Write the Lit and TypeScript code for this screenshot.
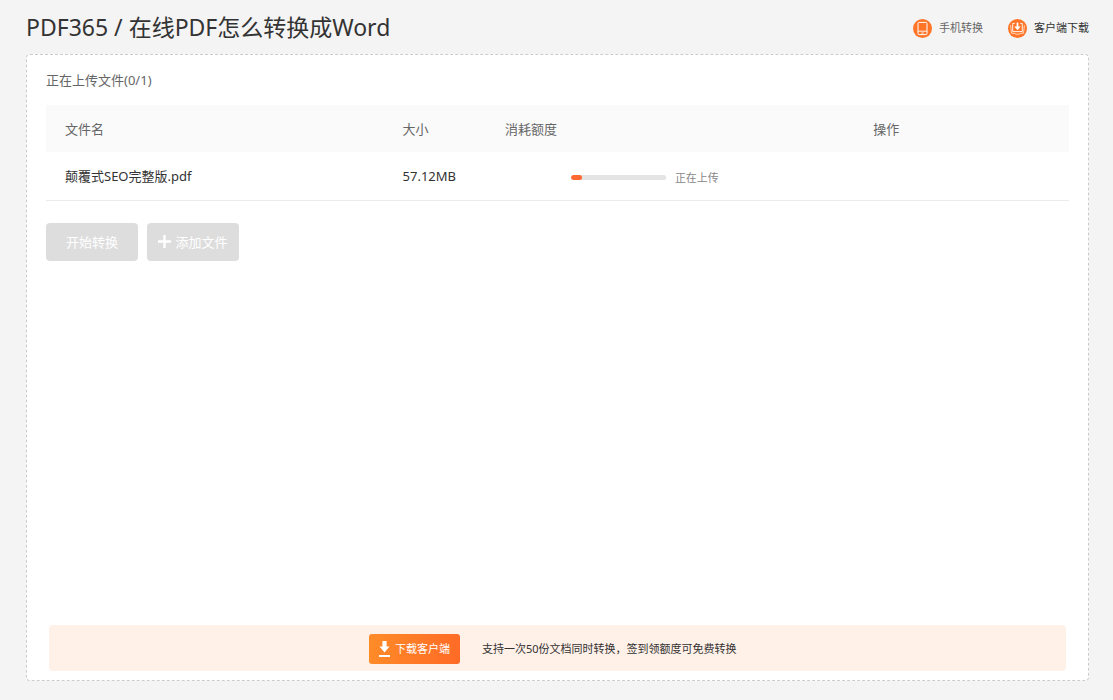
import { LitElement, html, css } from "lit";
import { customElement, state } from "lit/decorators.js";

interface UploadItem {
  name: string;
  size: string;
  percent: number;
  status: string;
}

@customElement("app-root")
export class AppRoot extends LitElement {
  static styles = css`
    :host {
      display: block;
      font-family: "Noto Sans", "Noto Sans CJK SC", sans-serif;
      font-size: 13px;
      line-height: 20px;
      color: #333;
    }
    * {
      box-sizing: border-box;
    }
    .page {
      display: flex;
      flex-direction: column;
      min-height: 100vh;
      padding: 0 24px 19px 26px;
      background: #f4f4f4;
    }
    .top {
      display: flex;
      align-items: center;
      justify-content: space-between;
      height: 54px;
    }
    .title {
      margin: 0;
      font-size: 23px;
      line-height: 32px;
      font-weight: 400;
    }
    .links {
      display: flex;
      gap: 25px;
      padding-top: 2px;
    }
    .link {
      display: flex;
      align-items: center;
      gap: 7px;
      font-size: 11px;
      color: #333;
      text-decoration: none;
    }
    .link.muted {
      color: #666;
    }
    .panel {
      flex: 1;
      display: flex;
      flex-direction: column;
      padding: 15px 19px 9px;
      background: #fff;
      border: 1px dashed #ccc;
      border-radius: 4px;
    }
    .status {
      margin: 0 0 15px;
      color: #666;
    }
    .files {
      width: 100%;
      table-layout: fixed;
      border-collapse: collapse;
    }
    .files th,
    .files td {
      padding: 0 19px;
      text-align: left;
      font-weight: 400;
    }
    .files th {
      height: 47px;
      background: #fafafa;
      color: #666;
    }
    .files td {
      height: 48px;
      border-bottom: 1px solid #ebebeb;
    }
    .col-name {
      width: 33%;
    }
    .col-size {
      width: 10%;
    }
    .col-quota {
      width: 36%;
    }
    .upload {
      display: flex;
      align-items: center;
      gap: 9px;
      padding: 4px 0 0 66px;
      font-size: 11px;
      color: #888;
    }
    .bar {
      appearance: none;
      display: block;
      width: 95px;
      height: 5px;
      border: 0;
      border-radius: 3px;
      overflow: hidden;
      background: #e4e4e4;
    }
    .bar::-webkit-progress-bar {
      background: #e4e4e4;
      border-radius: 3px;
    }
    .bar::-webkit-progress-value {
      background: #ff6a32;
      border-radius: 3px;
    }
    .actions {
      display: flex;
      gap: 9px;
      margin-top: 22px;
    }
    .btn {
      display: flex;
      align-items: center;
      justify-content: center;
      gap: 4px;
      min-width: 92px;
      height: 38px;
      padding: 0 10px;
      border: 0;
      border-radius: 4px;
      background: #ddd;
      color: #fff;
      font: inherit;
    }
    .banner {
      display: flex;
      align-items: center;
      justify-content: center;
      gap: 22px;
      min-height: 46px;
      margin: auto 3px 0;
      padding-top: 2px;
      background: #fff1e8;
      border-radius: 4px;
      font-size: 11px;
    }
    .download {
      display: flex;
      align-items: center;
      justify-content: center;
      gap: 5px;
      height: 30px;
      padding: 0 10px;
      border: 0;
      border-radius: 3px;
      background: linear-gradient(100deg, #ff8c28, #ff6a26);
      color: #fff;
      font: inherit;
    }
    .note {
      min-width: 264px;
    }
    svg {
      display: block;
      flex: none;
    }
  `;

  @state() private files: UploadItem[] = [
    { name: "颠覆式SEO完整版.pdf", size: "57.12MB", percent: 12, status: "正在上传" },
  ];

  render() {
    return html`
      <div class="page">
        <header class="top">
          <h1 class="title">PDF365 / 在线PDF怎么转换成Word</h1>
          <nav class="links">
            <a class="link muted" href="#mobile">
              <svg width="19" height="19" viewBox="0 0 19 19" fill="none" aria-hidden="true">
                <circle cx="9.5" cy="9.5" r="9.5" fill="#ff7426" />
                <rect x="5" y="3.4" width="9" height="12.2" rx="1.2" stroke="#fff" />
                <path d="M5 12.2h9" stroke="#fff" stroke-width="0.9" />
                <path d="M8.5 14h2" stroke="#fff" stroke-width="1" />
              </svg>
              手机转换
            </a>
            <a class="link" href="#client">
              <svg width="19" height="19" viewBox="0 0 19 19" fill="none" aria-hidden="true">
                <circle cx="9.5" cy="9.5" r="9.5" fill="#ff7426" />
                <path d="M6.8 4.4H4.7v8.2h9.6V4.4h-2.1" stroke="#fff" stroke-width="0.9" />
                <path
                  d="M2.6 6.2 3.5 14.2Q6.5 14 8 15.2h3Q12.500 14 15.500 14.2L16.400 6.2"
                  stroke="#ffe0cc"
                  stroke-width="0.9"
                />
                <path d="M9.5 3.6v5" stroke="#fff" stroke-width="1.8" />
                <path d="M6.300 7.600h6.400L9.500 11.300z" fill="#fff" />
              </svg>
              客户端下载
            </a>
          </nav>
        </header>
        <main class="panel">
          <p class="status">正在上传文件(0/${this.files.length})</p>
          <table class="files">
            <thead>
              <tr>
                <th class="col-name" scope="col">文件名</th>
                <th class="col-size" scope="col">大小</th>
                <th class="col-quota" scope="col">消耗额度</th>
                <th scope="col">操作</th>
              </tr>
            </thead>
            <tbody>
              ${this.files.map(
                (f) => html`
                  <tr>
                    <td>${f.name}</td>
                    <td>${f.size}</td>
                    <td>
                      <label class="upload">
                        <progress class="bar" max="100" .value=${f.percent}></progress>
                        ${f.status}
                      </label>
                    </td>
                    <td></td>
                  </tr>
                `
              )}
            </tbody>
          </table>
          <div class="actions">
            <button class="btn" type="button" disabled>开始转换</button>
            <button class="btn" type="button" disabled>
              <svg width="13" height="13" viewBox="0 0 13 13" aria-hidden="true">
                <path d="M6.5 0v13M0 6.5h13" stroke="#fff" stroke-width="2.4" />
              </svg>
              添加文件
            </button>
          </div>
          <footer class="banner">
            <button class="download" type="button">
              <svg width="11" height="16" viewBox="0 0 11 16" fill="#fff" aria-hidden="true">
                <path d="M3.400 0h4.200v5.600h2.900L5.500 11.400.5 5.600h2.900z" />
                <path d="M0 14h11v2H0z" />
              </svg>
              下载客户端
            </button>
            <span class="note">支持一次50份文档同时转换，签到领额度可免费转换</span>
          </footer>
        </main>
      </div>
    `;
  }
}
